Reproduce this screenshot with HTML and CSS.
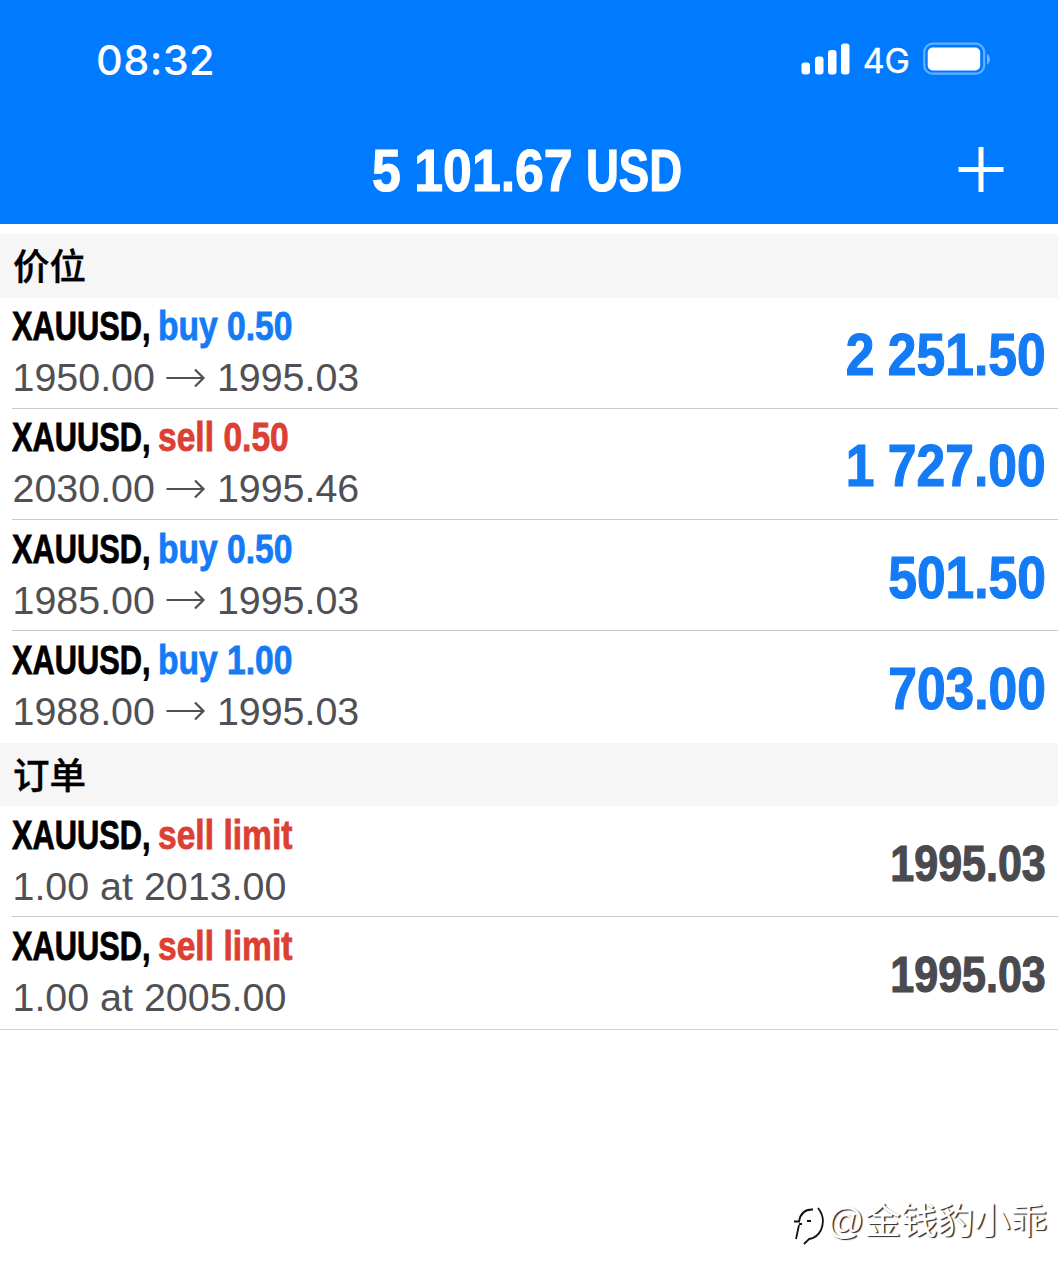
FILE: index.html
```html
<!DOCTYPE html>
<html lang="zh-CN">
<head>
    <meta charset="UTF-8">
    <meta name="viewport" content="width=device-width, initial-scale=1.0">
    <title>Trade</title>
    <link rel="stylesheet" href="styles.css">
</head>
<body>
    <header class="header">
        <div class="status-bar">
            <span class="time">08:32</span>
            <div class="status-icons">
                <svg class="signal" width="50" height="32" viewBox="0 0 50 32" fill="#fff">
                    <rect x="1.5" y="19.5" width="8.5" height="12" rx="3"/>
                    <rect x="15" y="13.5" width="8.5" height="18" rx="3"/>
                    <rect x="28" y="7" width="8.5" height="24.5" rx="3"/>
                    <rect x="41" y="0.5" width="8.5" height="31" rx="3"/>
                </svg>
                <span class="network">4G</span>
                <svg class="battery" width="68" height="34" viewBox="0 0 68 34">
                    <rect x="1.2" y="1.7" width="60" height="30" rx="8.5" fill="none" stroke="#fff" stroke-opacity="0.4" stroke-width="2.2"/>
                    <rect x="4.7" y="5.5" width="52.5" height="23" rx="5" fill="#fff"/>
                    <path d="M64 12c4 2 4 8.500 0 10.500z" fill="#fff" fill-opacity="0.45"/>
                </svg>
            </div>
        </div>
        <div class="title-bar">
            <h1 class="balance"><span class="amount">5 101.67</span><span class="currency">USD</span></h1>
            <svg class="add" width="46" height="46" viewBox="0 0 46 46" stroke="#fff" stroke-width="5">
                <path d="M0.500 22.500h45M23 0v45"/>
            </svg>
        </div>
    </header>

    <main>
        <h2 class="section-title">价位</h2>
        <ul class="list">
            <li class="row">
                <div class="info">
                    <div class="name"><span class="symbol">XAUUSD,</span><span class="side buy">buy 0.50</span></div>
                    <div class="detail">1950.00<svg class="arrow" viewBox="0 0 40 20"><path d="M0.500 10h37M29 1.500l8.500 8.500-8.500 8.500"/></svg>1995.03</div>
                </div>
                <span class="profit">2 251.50</span>
            </li>
            <li class="row">
                <div class="info">
                    <div class="name"><span class="symbol">XAUUSD,</span><span class="side sell">sell 0.50</span></div>
                    <div class="detail">2030.00<svg class="arrow" viewBox="0 0 40 20"><path d="M0.500 10h37M29 1.500l8.500 8.500-8.500 8.500"/></svg>1995.46</div>
                </div>
                <span class="profit">1 727.00</span>
            </li>
            <li class="row">
                <div class="info">
                    <div class="name"><span class="symbol">XAUUSD,</span><span class="side buy">buy 0.50</span></div>
                    <div class="detail">1985.00<svg class="arrow" viewBox="0 0 40 20"><path d="M0.500 10h37M29 1.500l8.500 8.500-8.500 8.500"/></svg>1995.03</div>
                </div>
                <span class="profit">501.50</span>
            </li>
            <li class="row">
                <div class="info">
                    <div class="name"><span class="symbol">XAUUSD,</span><span class="side buy">buy 1.00</span></div>
                    <div class="detail">1988.00<svg class="arrow" viewBox="0 0 40 20"><path d="M0.500 10h37M29 1.500l8.500 8.500-8.500 8.500"/></svg>1995.03</div>
                </div>
                <span class="profit">703.00</span>
            </li>
        </ul>

        <h2 class="section-title">订单</h2>
        <ul class="list orders">
            <li class="row">
                <div class="info">
                    <div class="name"><span class="symbol">XAUUSD,</span><span class="side sell">sell limit</span></div>
                    <div class="detail">1.00 at 2013.00</div>
                </div>
                <span class="price">1995.03</span>
            </li>
            <li class="row">
                <div class="info">
                    <div class="name"><span class="symbol">XAUUSD,</span><span class="side sell">sell limit</span></div>
                    <div class="detail">1.00 at 2005.00</div>
                </div>
                <span class="price">1995.03</span>
            </li>
        </ul>
    </main>

    <div class="watermark">
        <svg width="37" height="48" viewBox="0 0 37 48" fill="none" stroke="#111" stroke-width="1.8">
            <path d="M6 38L9 24M4 20.500h5Q11 8 23 8.500M9 23h3M17 20h4"/>
            <path d="M28 7Q36 17 31 29Q27 37 19 38L14 43"/>
        </svg>
        <span>@金钱豹小乖</span>
    </div>
</body>
</html>
```

FILE: styles.css
```css
* {
    box-sizing: border-box;
}
body {
    margin: 0;
    height: 1280px;
    background: #fff;
    font-family: "Liberation Sans", "Noto Sans CJK SC", sans-serif;
    position: relative;
    overflow: hidden;
}
h1, h2, ul {
    margin: 0;
    padding: 0;
}
.header {
    height: 224px;
    background: #007aff;
    color: #fff;
}
.status-bar {
    height: 118px;
    padding: 0 67px 0 96px;
    display: flex;
    align-items: center;
    justify-content: space-between;
    font-family: Inter, sans-serif;
}
.time {
    padding-top: 1px;
    font-size: 41.5px;
    font-weight: 500;
    letter-spacing: 0.4px;
}
.status-icons {
    display: flex;
    align-items: center;
}
.network {
    font-size: 34px;
    margin: 3px 13px 0 13px;
    -webkit-text-stroke: 0.4px;
}
.title-bar {
    height: 104px;
    display: grid;
    grid-template-columns: 1fr auto 1fr;
    align-items: center;
    padding: 0 54px 0 52px;
}
/* condensed face: regular bold squeezed horizontally */
.balance {
    grid-column: 2;
    display: flex;
    width: 312px;
    padding-top: 1px;
    font-size: 59.5px;
    line-height: 70px;
    white-space: nowrap;
    -webkit-text-stroke: 1.2px;
}
.amount {
    width: 214px;
    word-spacing: -1px;
    transform: scaleX(0.87);
    transform-origin: left;
}
.currency {
    transform: scaleX(0.765);
    transform-origin: left;
}
.add {
    justify-self: end;
}
.section-title {
    height: 63.5px;
    padding-left: 13px;
    background: #f6f6f6;
    font-family: "Noto Sans CJK SC", sans-serif;
    font-size: 36.5px;
    font-weight: 500;
    line-height: 61px;
    color: #000;
    -webkit-text-stroke: 0.4px;
}
main {
    padding-top: 10px;
}
.list {
    list-style: none;
    padding-left: 12px;
}
.row {
    height: 111.3px;
    padding-right: 12px;
    display: flex;
    justify-content: space-between;
    border-bottom: 1px solid #c8c8cc;
}
.row:last-child {
    border-bottom: none;
}
.orders {
    border-bottom: 1px solid #d0d0d3;
}
.info {
    padding-top: 3.5px;
}
.name {
    display: flex;
    font-size: 40px;
    font-weight: bold;
    line-height: 50px;
    white-space: nowrap;
    -webkit-text-stroke: 0.8px;
}
.symbol {
    width: 146px;
    color: #000;
    transform: scaleX(0.77);
    transform-origin: left;
}
.side {
    transform: scaleX(0.84);
    transform-origin: left;
}
.buy {
    color: #147bf5;
}
.sell {
    color: #dc4034;
}
.detail {
    display: flex;
    align-items: center;
    padding-left: 0.5px;
    font-size: 39.4px;
    line-height: 53px;
    color: #505054;
}
.arrow {
    width: 40px;
    height: 20px;
    margin: 0 11px 0 11px;
    fill: none;
    stroke: #505054;
    stroke-width: 2.2;
}
.profit, .price {
    font-weight: bold;
    line-height: 70px;
    white-space: nowrap;
    transform-origin: right;
    -webkit-text-stroke: 1.2px;
}
.profit {
    padding-top: 22.5px;
    font-size: 59.5px;
    color: #147bf5;
    word-spacing: -1px;
    transform: scaleX(0.867);
}
.price {
    padding-top: 23px;
    font-size: 50px;
    color: #4a4a4e;
    transform: scaleX(0.86);
}
.watermark {
    position: absolute;
    left: 790px;
    top: 1195px;
    display: flex;
    align-items: center;
    color: #fff;
    font-family: "Liberation Sans", "Noto Sans CJK SC", sans-serif;
    font-size: 36.6px;
    line-height: 48px;
    white-space: nowrap;
    text-shadow: 1.5px 1px 1px rgba(0, 0, 0, 0.85);
}
.watermark span {
    margin-top: -1px;
}
.watermark svg {
    margin-top: 6px;
}
```
